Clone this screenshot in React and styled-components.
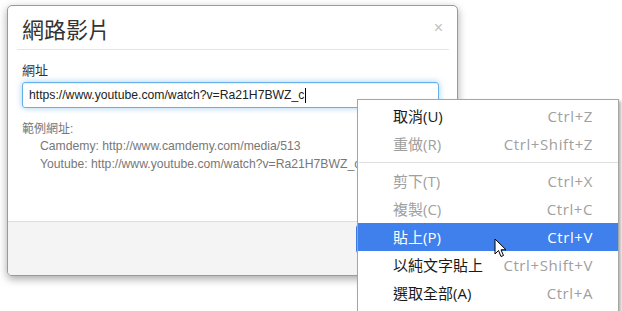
import styled, { createGlobalStyle } from "styled-components";

const GlobalStyle = createGlobalStyle`
  html, body {
    margin: 0;
    padding: 0;
    background: #fff;
    overflow: hidden;
  }
  body {
    font-family: "Liberation Sans", Arial, "Noto Sans CJK TC", sans-serif;
    color: #333;
  }
`;

const menuItems = [
  { label: "取消(U)", key: "Ctrl+Z" },
  { label: "重做(R)", key: "Ctrl+Shift+Z", disabled: true },
  { divider: true },
  { label: "剪下(T)", key: "Ctrl+X", disabled: true },
  { label: "複製(C)", key: "Ctrl+C", disabled: true },
  { label: "貼上(P)", key: "Ctrl+V", active: true },
  { label: "以純文字貼上", key: "Ctrl+Shift+V" },
  { label: "選取全部(A)", key: "Ctrl+A" },
];

const App = () => {
  return (
    <Page>
      <GlobalStyle />
      <Modal>
        <Header>
          <Title>網路影片</Title>
          <Close>×</Close>
        </Header>
        <Body>
          <Label>網址</Label>
          <Input>
            https://www.youtube.com/watch?v=Ra21H7BWZ_c
            <Caret />
          </Input>
          <Hint>範例網址:</Hint>
          <Example>Camdemy: http://www.camdemy.com/media/513</Example>
          <Example>Youtube: http://www.youtube.com/watch?v=Ra21H7BWZ_c</Example>
        </Body>
        <Footer>
          <Button>確定</Button>
        </Footer>
      </Modal>

      <Menu>
        {menuItems.map((item, i) =>
          item.divider ? (
            <Divider key={i} />
          ) : (
            <Item key={i} $active={item.active}>
              <ItemLabel $disabled={item.disabled} $active={item.active}>
                {item.label}
              </ItemLabel>
              <Shortcut $active={item.active}>{item.key}</Shortcut>
            </Item>
          )
        )}
      </Menu>

      <Cursor width="14" height="21" viewBox="0 0 14 21">
        <path
          d="M1 1 L1 16 L4.5 12.5 L7 18.5 L9.5 17.5 L7 11.8 L12 11.8 Z"
          fill="#fff"
          stroke="#000"
          strokeWidth="1"
          strokeLinejoin="miter"
        />
      </Cursor>
    </Page>
  );
};

export default App;

const Page = styled.div`
  position: relative;
  width: 622px;
  height: 311px;
  padding: 5px 0 0 7px;
  box-sizing: border-box;
`;

const Modal = styled.div`
  width: 451px;
  height: 271px;
  box-sizing: border-box;
  border: 1px solid #9a9a9a;
  border-radius: 5px;
  background: #fff;
  box-shadow: 0 3px 8px rgba(0, 0, 0, 0.35);
  display: flex;
  flex-direction: column;
  overflow: hidden;
`;

const Header = styled.div`
  margin: 0 8px 0 9px;
  padding: 7px 6px 6px 5px;
  border-bottom: 1px solid #e5e5e5;
  display: flex;
  justify-content: space-between;
  align-items: center;
`;

const Title = styled.h3`
  margin: 0;
  font-family: "Noto Sans CJK TC", sans-serif;
  font-size: 22px;
  font-weight: 400;
  line-height: 30px;
  color: #333;
`;

const Close = styled.span`
  font-family: "Liberation Sans", Arial, sans-serif;
  font-size: 16px;
  line-height: 16px;
  color: #c2c2c2;
  margin-top: -1px;
`;

const Body = styled.div`
  padding: 11px 18px 0 14px;
  flex: 1;
`;

const Label = styled.div`
  font-family: "Noto Sans CJK TC", sans-serif;
  font-size: 13px;
  line-height: 18px;
  color: #333;
  margin-bottom: 3px;
`;

const Input = styled.div`
  height: 26px;
  box-sizing: border-box;
  border: 1px solid #66afe9;
  border-radius: 3px;
  box-shadow: inset 0 1px 1px rgba(0, 0, 0, 0.075),
    0 0 6px rgba(102, 175, 233, 0.6);
  padding: 0 6px;
  display: flex;
  align-items: center;
  font-size: 12.2px;
  color: #222;
`;

const Caret = styled.span`
  width: 1px;
  height: 15px;
  background: #000;
  margin-left: 1px;
`;

const Hint = styled.div`
  margin-top: 13px;
  font-family: "Liberation Sans", Arial, "Noto Sans CJK TC", sans-serif;
  font-size: 12px;
  line-height: 16px;
  color: #777;
`;

const Example = styled.div`
  padding-left: 18px;
  font-size: 12.2px;
  line-height: 18px;
  color: #777;
  white-space: nowrap;
`;

const Footer = styled.div`
  height: 54px;
  box-sizing: border-box;
  border-top: 1px solid #ddd;
  background: #f4f4f4;
  display: flex;
  align-items: flex-start;
  padding: 3px 0 0 348px;
`;

const Button = styled.div`
  background: #3c7be3;
  color: #fff;
  height: 28px;
  padding: 0 16px;
  border-radius: 3px;
  display: flex;
  align-items: center;
  font-family: "Noto Sans CJK TC", sans-serif;
  font-size: 13px;
`;

const Menu = styled.div`
  position: absolute;
  left: 357px;
  top: 99px;
  width: 262px;
  box-sizing: border-box;
  border: 1px solid #a6a6a6;
  background: #fff;
  padding: 2px 0 10px;
  box-shadow: 2px 2px 3px rgba(0, 0, 0, 0.3);
`;

const Item = styled.div`
  height: 28px;
  display: flex;
  justify-content: space-between;
  align-items: center;
  padding: 0 25px 0 35px;
  background: ${(p) => (p.$active ? "#4080ec" : "transparent")};
`;

const ItemLabel = styled.span`
  font-family: "Open Sans", "Noto Sans CJK TC", sans-serif;
  font-size: 15px;
  line-height: 20px;
  color: ${(p) => (p.$active ? "#fff" : p.$disabled ? "#a0a0a0" : "#1a1a1a")};
`;

const Shortcut = styled.span`
  font-family: "Open Sans", sans-serif;
  font-size: 15px;
  line-height: 20px;
  letter-spacing: 0.6px;
  color: ${(p) => (p.$active ? "#fff" : "#a0a0a0")};
`;

const Divider = styled.div`
  height: 1px;
  background: #e0e0e0;
  margin: 4px 0 4px 1px;
`;

const Cursor = styled.svg`
  position: absolute;
  left: 494px;
  top: 238px;
`;
